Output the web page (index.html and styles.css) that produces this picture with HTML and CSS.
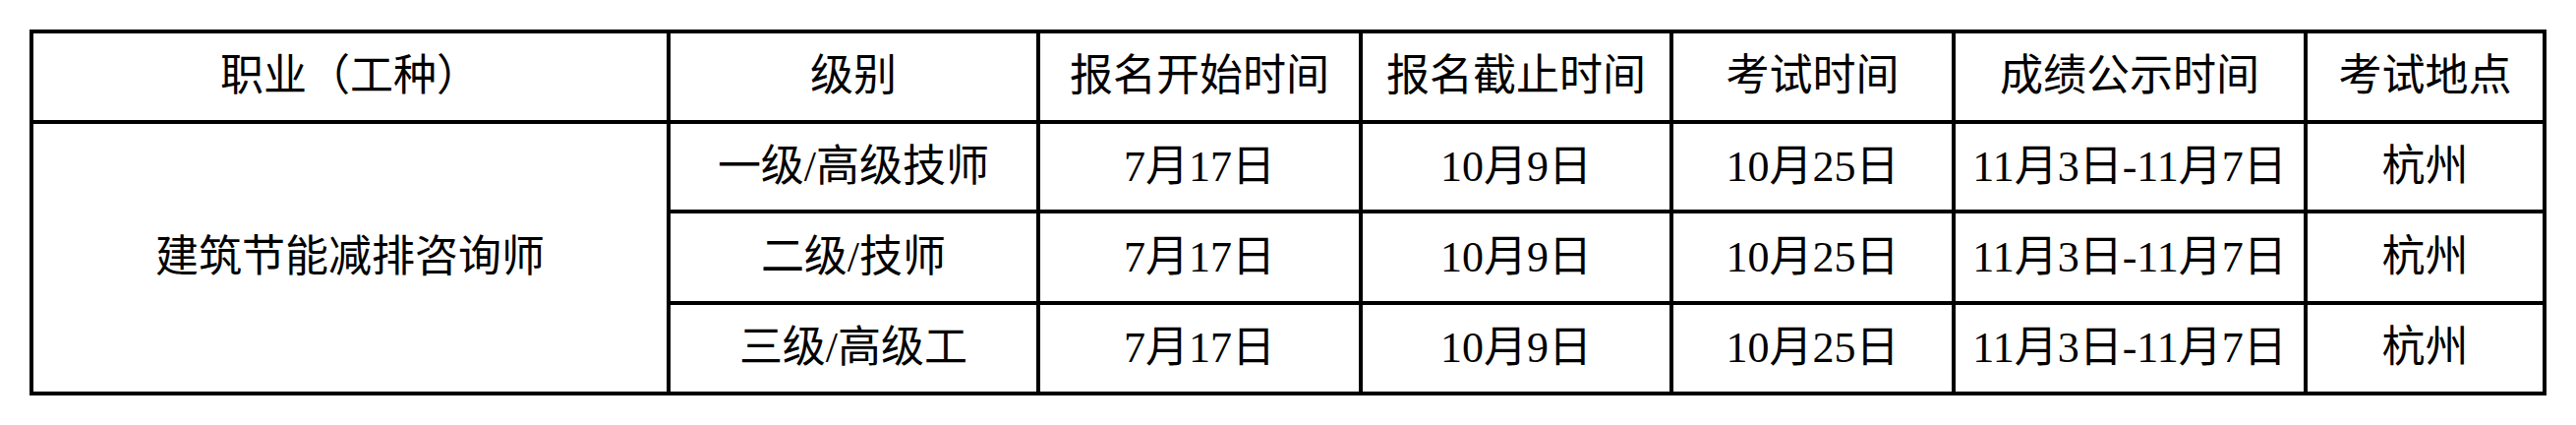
FILE: index.html
```html
<!DOCTYPE html>
<html lang="zh-CN">
<head>
<meta charset="utf-8">
<title>考试安排</title>
<link rel="stylesheet" href="styles.css">
</head>
<body>
<div class="page">
  <table class="exam">
    <colgroup>
      <col class="c1"><col class="c2"><col class="c3"><col class="c4"><col class="c5"><col class="c6"><col class="c7">
    </colgroup>
    <thead>
      <tr>
        <th>职业（工种）</th>
        <th>级别</th>
        <th>报名开始时间</th>
        <th>报名截止时间</th>
        <th>考试时间</th>
        <th>成绩公示时间</th>
        <th>考试地点</th>
      </tr>
    </thead>
    <tbody>
      <tr class="r1">
        <td rowspan="3">建筑节能减排咨询师</td>
        <td>一级/高级技师</td>
        <td>7月17日</td>
        <td>10月9日</td>
        <td>10月25日</td>
        <td>11月3日-11月7日</td>
        <td>杭州</td>
      </tr>
      <tr class="r2">
        <td>二级/技师</td>
        <td>7月17日</td>
        <td>10月9日</td>
        <td>10月25日</td>
        <td>11月3日-11月7日</td>
        <td>杭州</td>
      </tr>
      <tr class="r3">
        <td>三级/高级工</td>
        <td>7月17日</td>
        <td>10月9日</td>
        <td>10月25日</td>
        <td>11月3日-11月7日</td>
        <td>杭州</td>
      </tr>
    </tbody>
  </table>
</div>
</body>
</html>
```
FILE: styles.css
```css
html, body {
  margin: 0;
  padding: 0;
  background: #ffffff;
}

.page {
  padding: 30px 0 0 30px;
}

.exam {
  table-layout: fixed;
  border-collapse: separate;
  border-spacing: 4px;
  background: #000000;
  width: 2560px;
  font-family: "Liberation Serif", "Noto Sans CJK SC", serif;
  font-size: 44px;
  color: #000000;
}

.c1 { width: 644px; }
.c2 { width: 372px; }
.c3 { width: 324px; }
.c4 { width: 312px; }
.c5 { width: 283px; }
.c6 { width: 354px; }
.c7 { width: 239px; }

.exam th,
.exam td {
  background: #ffffff;
  padding: 0;
  text-align: center;
  vertical-align: middle;
  font-weight: normal;
  line-height: 1;
  white-space: nowrap;
}

.exam thead th { height: 88px; }
.exam .r1 td { height: 87px; }
.exam .r2 td { height: 89px; }
.exam .r3 td { height: 88px; }
```
